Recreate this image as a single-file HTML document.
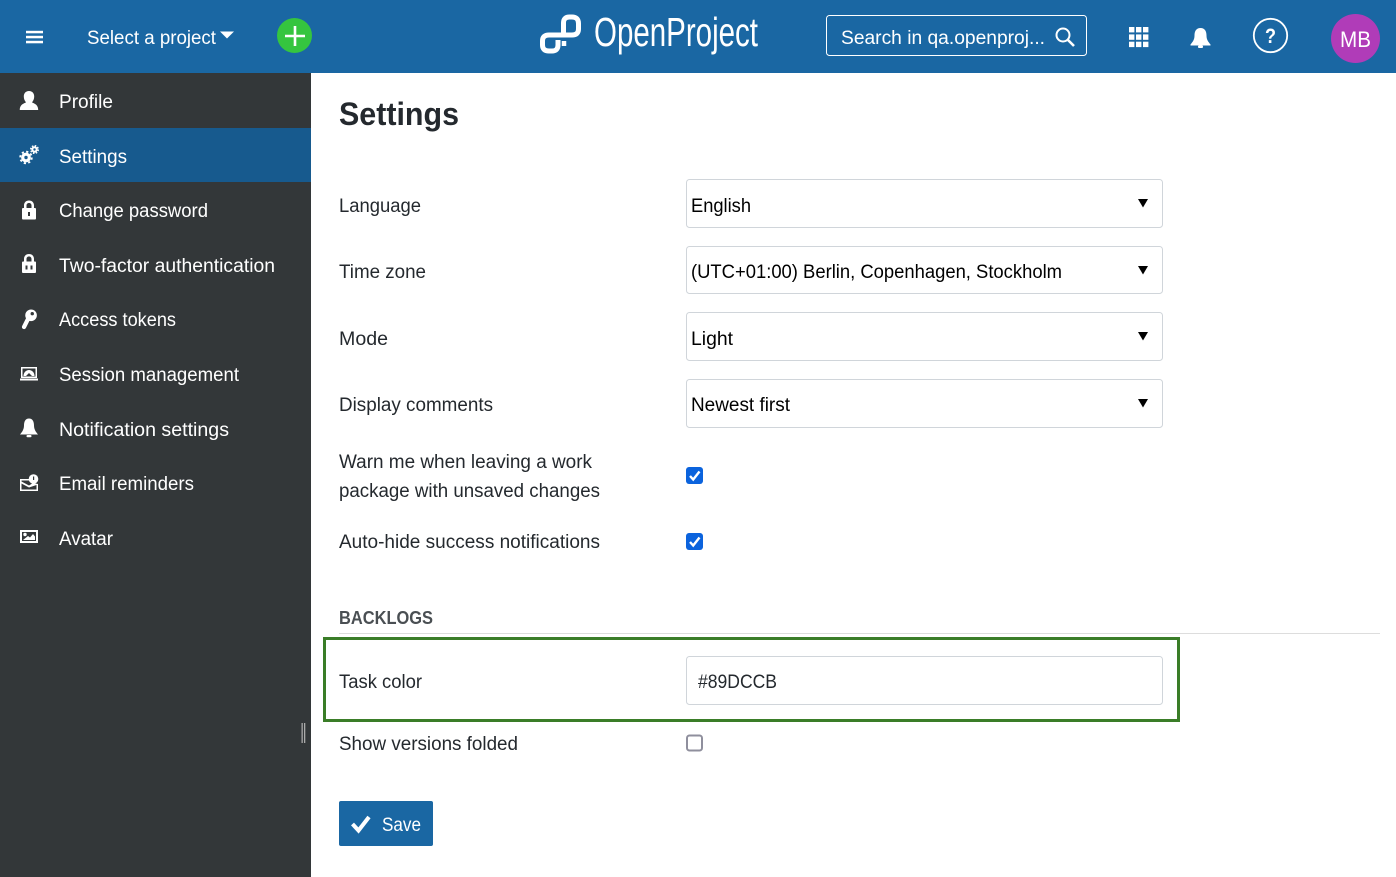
<!DOCTYPE html>
<html><head><meta charset="utf-8"><title>Settings</title>
<style>
html,body{margin:0;padding:0;background:#fff;width:1396px;height:877px;overflow:hidden}
svg{display:block}
text{font-family:"Liberation Sans",sans-serif;font-size:19px}
.w{fill:#fff}.d{fill:#24292e}
</style></head><body>
<svg width="1396" height="877" viewBox="0 0 1396 877" xmlns="http://www.w3.org/2000/svg">
<rect width="1396" height="877" fill="#fff"/>
<!-- header -->
<rect width="1396" height="73" fill="#1a67a3"/>
<g fill="#fff"><rect x="26" y="30.800" width="17" height="2.500"/><rect x="26" y="35.800" width="17" height="2.500"/><rect x="26" y="40.800" width="17" height="2.500"/></g>
<text class="w" x="87" y="44" textLength="129" lengthAdjust="spacingAndGlyphs">Select a project</text>
<path d="M220 31.500H234L227 38.500Z" fill="#fff"/>
<circle cx="294.500" cy="35.500" r="17.500" fill="#35c53f"/>
<path d="M295 26V46M285 36H305" stroke="#fff" stroke-width="2.600"/>
<!-- logo -->
<path d="M558 40V45Q558 51 552 51H549Q542.500 51 542.500 45V41Q542.500 35 549 35H572Q578.500 35 578.500 29V23.500Q578.500 17 572 17H569.500Q563.500 17 563.500 23V34" fill="none" stroke="#fff" stroke-width="5"/>
<path d="M564 41V46" stroke="#fff" stroke-width="4.500"/>
<text class="w" x="594" y="46" style="font-size:41px" textLength="164" lengthAdjust="spacingAndGlyphs">OpenProject</text>
<!-- search -->
<rect x="826.500" y="15.500" width="260" height="40" rx="3" fill="none" stroke="#fff"/>
<text class="w" x="841" y="44" textLength="204" lengthAdjust="spacingAndGlyphs">Search in qa.openproj...</text>
<circle cx="1063" cy="35" r="6.500" fill="none" stroke="#fff" stroke-width="2"/>
<path d="M1068 40L1074 46" stroke="#fff" stroke-width="2.600"/>
<!-- grid -->
<g fill="#fff">
<rect x="1129" y="27" width="5.400" height="5.400"/><rect x="1136" y="27" width="5.400" height="5.400"/><rect x="1143" y="27" width="5.400" height="5.400"/>
<rect x="1129" y="34.400" width="5.400" height="5.400"/><rect x="1136" y="34.400" width="5.400" height="5.400"/><rect x="1143" y="34.400" width="5.400" height="5.400"/>
<rect x="1129" y="41.700" width="5.400" height="5.400"/><rect x="1136" y="41.700" width="5.400" height="5.400"/><rect x="1143" y="41.700" width="5.400" height="5.400"/>
</g>
<!-- bell -->
<path d="M1200.500 28C1205 28 1206.500 31.500 1206.500 35.500C1206.500 40 1208.500 42 1210.500 44.500V45.500H1190.500V44.500C1192.500 42 1194.500 40 1194.500 35.500C1194.500 31.500 1196 28 1200.500 28Z" fill="#fff"/>
<rect x="1198" y="45.500" width="5" height="2.500" rx="1" fill="#fff"/>
<!-- help -->
<circle cx="1270.500" cy="35.500" r="16.700" fill="none" stroke="#fff" stroke-width="1.800"/>
<text class="w" x="1265" y="43" style="font-size:21px;font-weight:700" textLength="11" lengthAdjust="spacingAndGlyphs">?</text>
<!-- avatar -->
<ellipse cx="1355.500" cy="38.500" rx="24.500" ry="24.500" fill="#b03cb8"/>
<text class="w" x="1340" y="47" style="font-size:22px" textLength="31" lengthAdjust="spacingAndGlyphs">MB</text>
<!-- sidebar -->
<rect x="0" y="73" width="311" height="804" fill="#333739"/>
<rect x="0" y="128" width="311" height="54" fill="#175a8e"/>
<g>
<text class="w" x="59" y="108" textLength="54" lengthAdjust="spacingAndGlyphs">Profile</text>
<text class="w" x="59" y="163" textLength="68" lengthAdjust="spacingAndGlyphs">Settings</text>
<text class="w" x="59" y="217" textLength="149" lengthAdjust="spacingAndGlyphs">Change password</text>
<text class="w" x="59" y="272" textLength="216" lengthAdjust="spacingAndGlyphs">Two-factor authentication</text>
<text class="w" x="59" y="326" textLength="117" lengthAdjust="spacingAndGlyphs">Access tokens</text>
<text class="w" x="59" y="381" textLength="180" lengthAdjust="spacingAndGlyphs">Session management</text>
<text class="w" x="59" y="436" textLength="170" lengthAdjust="spacingAndGlyphs">Notification settings</text>
<text class="w" x="59" y="490" textLength="135" lengthAdjust="spacingAndGlyphs">Email reminders</text>
<text class="w" x="59" y="545" textLength="54" lengthAdjust="spacingAndGlyphs">Avatar</text>
</g>
<!-- sidebar icons -->
<g fill="#fff">
<!-- profile -->
<path d="M29 91C32.500 91 34.200 93.500 34.200 96.500C34.200 99 33.300 100.800 32 102.200C33.500 103.500 38.200 104 38.200 110H19.800C19.800 104 24.500 103.500 26 102.200C24.700 100.800 23.800 99 23.800 96.500C23.800 93.500 25.500 91 29 91Z"/>
<!-- settings -->
<circle cx="26" cy="157.500" r="3.300" fill="none" stroke="#fff" stroke-width="3.200"/>
<circle cx="26" cy="157.500" r="5.800" fill="none" stroke="#fff" stroke-width="1.800" stroke-dasharray="2.200 2.350"/>
<circle cx="34.500" cy="149.500" r="2.200" fill="none" stroke="#fff" stroke-width="2"/>
<circle cx="34.500" cy="149.500" r="3.800" fill="none" stroke="#fff" stroke-width="1.400" stroke-dasharray="1.600 1.400"/>
<!-- lock 1 -->
<path d="M22 209V218.500Q22 219.500 23 219.500H35Q36 219.500 36 218.500V209Q36 208 35 208H34V205.500C34 202.500 32 200.500 29 200.500C26 200.500 24 202.500 24 205.500V208H23Q22 208 22 209ZM26.500 208V205.500C26.500 204 27.500 203 29 203C30.500 203 31.500 204 31.500 205.500V208Z" fill-rule="evenodd"/>
<rect x="28" y="212" width="2" height="4" fill="#333739"/>
<!-- lock 2 -->
<path d="M22 262.500V272Q22 273 23 273H35Q36 273 36 272V262.500Q36 261.500 35 261.500H34V259C34 256 32 254 29 254C26 254 24 256 24 259V261.500H23Q22 261.500 22 262.500ZM26.500 261.500V259C26.500 257.500 27.500 256.500 29 256.500C30.500 256.500 31.500 257.500 31.500 259V261.500Z" fill-rule="evenodd"/>
<rect x="25.500" y="265.500" width="2" height="4" fill="#333739"/><rect x="30.500" y="265.500" width="2" height="4" fill="#333739"/>
<!-- key -->
<path d="M28.500 318L24 327" stroke="#fff" stroke-width="4.200" fill="none" stroke-linecap="round"/>
<path d="M31 309.500A5.800 5.800 0 1 0 31.100 321.100A5.800 5.800 0 1 0 31 309.500ZM32.300 312A1.700 1.700 0 1 1 32.200 315.400A1.700 1.700 0 1 1 32.300 312Z" fill-rule="evenodd"/>
<!-- session -->
<path d="M21 367H37V378H21ZM22.500 368.500V376.500H35.500V368.500Z" fill-rule="evenodd"/>
<path d="M23.500 376A5.500 6 0 0 1 34.500 376H32L29 373L26 376Z"/>
<rect x="20" y="378.500" width="18" height="2"/>
<!-- bell -->
<path d="M29 418.500C32.500 418.500 34 421.500 34 425.500C34 430 36.500 432.500 38 434.500H20C21.500 432.500 24 430 24 425.500C24 421.500 25.500 418.500 29 418.500Z"/>
<rect x="26.500" y="435" width="5" height="2.200" rx="1"/>
<!-- email -->
<path d="M20 479H30.500V480.500H21.500V481.500L29 485.500L33 483L38 484V491H20ZM21.500 483.500V489.500H36.500V485L29 487.500Z" fill-rule="evenodd"/>
<circle cx="33.500" cy="479" r="4.800"/>
<rect x="33" y="476.500" width="1.200" height="3.500" fill="#333739"/>
<!-- avatar -->
<path d="M20 530H38V543H20ZM22 532V541H36V532Z" fill-rule="evenodd"/>
<path d="M23 540L28 536L30 537.500L33 534L35 536.500V540Z"/>
<circle cx="25" cy="534.500" r="1.700"/>
</g>
<!-- resize handle -->
<g fill="#aaa"><rect x="301.500" y="723" width="1.300" height="20"/><rect x="304" y="723" width="1.300" height="20"/></g>
<!-- title -->
<text x="339" y="125" style="font-size:32px;font-weight:700" fill="#24292e" textLength="120" lengthAdjust="spacingAndGlyphs">Settings</text>
<!-- labels -->
<text class="d" x="339" y="212" textLength="82" lengthAdjust="spacingAndGlyphs">Language</text>
<text class="d" x="339" y="278" textLength="87" lengthAdjust="spacingAndGlyphs">Time zone</text>
<text class="d" x="339" y="345" textLength="49" lengthAdjust="spacingAndGlyphs">Mode</text>
<text class="d" x="339" y="411" textLength="154" lengthAdjust="spacingAndGlyphs">Display comments</text>
<text class="d" x="339" y="468" textLength="253" lengthAdjust="spacingAndGlyphs">Warn me when leaving a work</text>
<text class="d" x="339" y="497" textLength="261" lengthAdjust="spacingAndGlyphs">package with unsaved changes</text>
<text class="d" x="339" y="548" textLength="261" lengthAdjust="spacingAndGlyphs">Auto-hide success notifications</text>
<text x="339" y="624" style="font-weight:700;font-size:18px" fill="#4a4f53" textLength="94" lengthAdjust="spacingAndGlyphs">BACKLOGS</text>
<text class="d" x="339" y="688" textLength="83" lengthAdjust="spacingAndGlyphs">Task color</text>
<text class="d" x="339" y="750" textLength="179" lengthAdjust="spacingAndGlyphs">Show versions folded</text>
<!-- selects -->
<g fill="#fff" stroke="#d0d5da">
<rect x="686.500" y="179.500" width="476" height="48" rx="3"/>
<rect x="686.500" y="246.500" width="476" height="47" rx="3"/>
<rect x="686.500" y="312.500" width="476" height="48" rx="3"/>
<rect x="686.500" y="379.500" width="476" height="48" rx="3"/>
<rect x="686.500" y="656.500" width="476" height="48" rx="3"/>
</g>
<g fill="#000">
<path d="M1138 199H1148L1143 207.500Z"/>
<path d="M1138 266H1148L1143 274.500Z"/>
<path d="M1138 332H1148L1143 340.500Z"/>
<path d="M1138 399H1148L1143 407.500Z"/>
</g>
<text x="691" y="212" fill="#000" textLength="60" lengthAdjust="spacingAndGlyphs">English</text>
<text x="691" y="278" fill="#000" textLength="371" lengthAdjust="spacingAndGlyphs">(UTC+01:00) Berlin, Copenhagen, Stockholm</text>
<text x="691" y="345" fill="#000" textLength="42" lengthAdjust="spacingAndGlyphs">Light</text>
<text x="691" y="411" fill="#000" textLength="99" lengthAdjust="spacingAndGlyphs">Newest first</text>
<text class="d" x="698" y="688" textLength="79" lengthAdjust="spacingAndGlyphs">#89DCCB</text>
<!-- checkboxes -->
<rect x="686" y="467" width="17" height="17" rx="3" fill="#0b63dd"/>
<path d="M690 476L693.200 479.500L699.500 471.500" fill="none" stroke="#fff" stroke-width="2.400"/>
<rect x="686" y="533" width="17" height="17" rx="3" fill="#0b63dd"/>
<path d="M690 542L693.200 545.500L699.500 537.500" fill="none" stroke="#fff" stroke-width="2.400"/>
<rect x="687" y="735.500" width="15" height="15" rx="2.500" fill="#fff" stroke="#8f8f9d" stroke-width="2"/>
<!-- hr + highlight -->
<rect x="339" y="633" width="1041" height="1" fill="#ddd"/>
<rect x="324.500" y="638.500" width="854" height="82" fill="none" stroke="#3a7d28" stroke-width="3"/>
<!-- save -->
<rect x="339" y="801" width="94" height="45" rx="2" fill="#1a67a3"/>
<path d="M352.500 824L358.500 830.500L369 817" fill="none" stroke="#fff" stroke-width="4"/>
<text class="w" x="382" y="831" textLength="39" lengthAdjust="spacingAndGlyphs">Save</text>
</svg>
</body></html>
